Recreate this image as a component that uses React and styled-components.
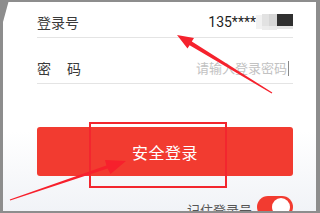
import React from 'react';
import styled, { createGlobalStyle } from 'styled-components';

const GlobalStyle = createGlobalStyle`
  html, body {
    margin: 0;
    padding: 0;
    background: #ffffff;
    overflow: hidden;
  }
  * {
    box-sizing: border-box;
  }
`;

const Screen = styled.div`
  position: relative;
  width: 320px;
  height: 213px;
  overflow: hidden;
  font-family: 'Noto Sans CJK SC', 'Noto Sans', sans-serif;
`;

const Frame = styled.div`
  width: 100%;
  height: 100%;
  border-style: solid;
  border-color: #8d8d8d;
  border-width: 2px 4px 2px 3px;
  background: linear-gradient(180deg, #ffffff 0%, #ffffff 62%, #f1f3f7 100%);
  overflow: hidden;
`;

const Content = styled.div`
  display: flex;
  flex-direction: column;
  padding: 0 23px 0 34px;
`;

const FieldRow = styled.div`
  display: flex;
  align-items: flex-end;
  justify-content: space-between;
  height: ${(p) => p.$height}px;
  padding-bottom: 7px;
  border-bottom: 1px solid #e4e4e4;
`;

const Label = styled.span`
  font-size: 14px;
  line-height: 16px;
  color: #3a3a3a;
  letter-spacing: ${(p) => (p.$spread ? '1px' : '0')};
`;

const Value = styled.div`
  display: flex;
  align-items: center;
  gap: 0;
`;

const Phone = styled.span`
  font-family: Roboto, 'Liberation Sans', sans-serif;
  font-size: 14px;
  line-height: 16px;
  color: #1e1e1e;
`;

const Placeholder = styled.span`
  font-size: 13px;
  line-height: 16px;
  color: #c2c2c2;
`;

const Caret = styled.span`
  width: 1px;
  height: 15px;
  margin: 0 4px 0 1px;
  background: #8a8a8a;
`;

const SubmitButton = styled.button`
  margin-top: 43px;
  height: 49px;
  width: 100%;
  border: none;
  border-radius: 3px;
  background: #f23b30;
  color: #ffffff;
  font-family: 'Noto Sans CJK SC', 'Noto Sans', sans-serif;
  font-size: 16px;
  letter-spacing: 0.5px;
  padding: 0;
`;

const RememberRow = styled.div`
  margin-top: 20px;
  display: flex;
  align-items: center;
  justify-content: flex-end;
  gap: 5px;
`;

const RememberText = styled.span`
  font-size: 13px;
  line-height: 16px;
  color: #555555;
  margin-top: 6px;
`;

const Toggle = styled.div`
  position: relative;
  width: 36px;
  height: 22px;
  border-radius: 11px;
  background: ${(p) => (p.$on ? '#f23b30' : '#dddddd')};
`;

const Knob = styled.div`
  position: absolute;
  top: 2px;
  right: 3px;
  width: 18px;
  height: 18px;
  border-radius: 50%;
  background: #ffffff;
`;

const Highlight = styled.div`
  position: absolute;
  left: 89px;
  top: 122px;
  width: 138px;
  height: 66px;
  border: 2px solid #f3262e;
  pointer-events: none;
`;

const Overlay = styled.svg`
  position: absolute;
  left: 0;
  top: 0;
  pointer-events: none;
`;

const Mosaic = () => (
  <svg width="37" height="16" viewBox="0 0 37 16">
    <rect x="0" y="1" width="6" height="14" fill="#f1f1f1" />
    <rect x="6" y="0" width="7" height="12" fill="#e2e2e2" />
    <rect x="6" y="12" width="7" height="4" fill="#ececec" />
    <rect x="13" y="0" width="8" height="12" fill="#d6d6d6" />
    <rect x="13" y="12" width="8" height="4" fill="#eaeaea" />
    <rect x="21" y="0" width="16" height="12" fill="#303030" />
    <rect x="21" y="12" width="16" height="3" fill="#e6e6e6" />
  </svg>
);

const Arrows = () => (
  <Overlay width="320" height="213" viewBox="0 0 320 213">
    <polygon points="0,0 9,0 3,22 0,22" fill="#8d8d8d" />
    <polygon
      points="177,35 194,38 191.8,41.5 272.3,92.6 271.7,93.4 189.6,45.3 187.5,48.6"
      fill="#f5222d"
    />
    <polygon
      points="126,161 110.5,174 107.6,168.5 10.2,200.5 9.8,199.5 106.4,165.4 105,160"
      fill="#f7202c"
    />
  </Overlay>
);

export default function App() {
  return (
    <>
      <GlobalStyle />
      <Screen>
        <Frame>
          <Content>
            <FieldRow $height={36}>
              <Label>登录号</Label>
              <Value>
                <Phone>135****</Phone>
                <Mosaic />
              </Value>
            </FieldRow>
            <FieldRow $height={46}>
              <Label $spread>密　码</Label>
              <Value>
                <Placeholder>请输入登录密码</Placeholder>
                <Caret />
              </Value>
            </FieldRow>
            <SubmitButton>安全登录</SubmitButton>
            <RememberRow>
              <RememberText>记住登录号</RememberText>
              <Toggle $on>
                <Knob />
              </Toggle>
            </RememberRow>
          </Content>
        </Frame>
        <Highlight />
        <Arrows />
      </Screen>
    </>
  );
}
